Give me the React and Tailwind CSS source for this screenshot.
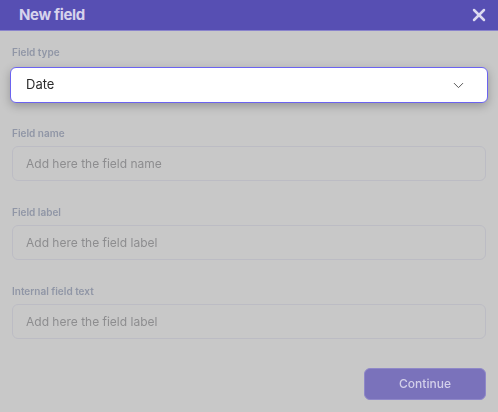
import { ChevronDown, X } from 'lucide-react'

const font = { fontFamily: 'Inter, "Noto Sans", sans-serif' }

function Field({ label, placeholder, top }) {
  return (
    <div className={top}>
      <div className="h-[14px] leading-[14px] text-[10px] font-semibold text-[#9096a6]">{label}</div>
      <div className="mt-[6px] h-[35px] rounded-md border border-[#bcbcc4] flex items-center px-[13px] text-[12px] text-[#8d8d8f]">
        {placeholder}
      </div>
    </div>
  )
}

export default function App() {
  return (
    <div className="w-[498px] h-[412px] bg-[#c8c8c8] overflow-hidden relative" style={font}>
      <div className="blur-[0.5px]">
        {/* Header */}
        <div className="h-[31px] bg-[#574fb3] border-b border-[#8a84cc] flex items-center justify-between pl-[19px] pr-[9px]">
          <span className="text-[15px] font-bold text-[#d6d3ec] tracking-tight">New field</span>
          <X size={20} strokeWidth={3} className="text-[#dcdaf0]" />
        </div>

        <div className="px-[12px]">
          <div className="pt-[14px] h-[14px] leading-[14px] text-[10px] font-semibold text-[#9096a6] box-content">Field type</div>
          <div className="h-[44px]" />

          <Field label="Field name" placeholder="Add here the field name" top="mt-[23px]" />
          <Field label="Field label" placeholder="Add here the field label" top="mt-[24px]" />
          <Field label="Internal field text" placeholder="Add here the field label" top="mt-[24px]" />

          <div className="mt-[29px] flex justify-end">
            <div className="w-[122px] h-[32px] rounded-md bg-[#7a72bb] border border-[#8f88c8] flex items-center justify-center text-[12px] font-medium text-[#d3d0ea]">
              Continue
            </div>
          </div>
        </div>
      </div>

      {/* Focused select popped over the overlay */}
      <div className="absolute left-[10px] top-[67px] w-[478px] h-[36px] bg-white rounded-md border border-[#6b63f0] shadow-[0_3px_10px_rgba(0,0,0,0.25)] flex items-center justify-between pl-[15px] pr-[20px]">
        <span className="text-[13px] text-[#2b2b2b]">Date</span>
        <ChevronDown size={17} strokeWidth={1.4} className="text-[#555]" />
      </div>
    </div>
  )
}
